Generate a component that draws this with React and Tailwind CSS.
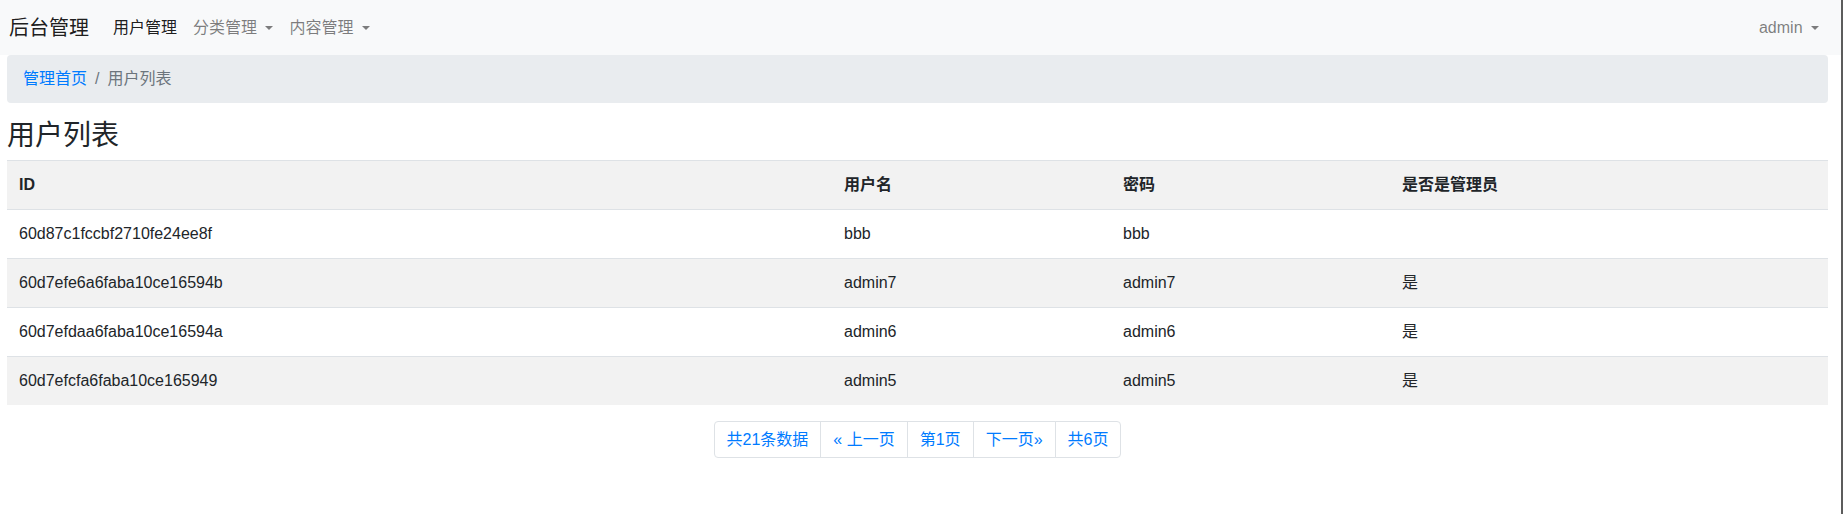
import React from "react";

function Caret() {
  return (
    <span className="inline-block w-0 h-0 ml-[4px] align-[0.255em] border-t-[4.8px] border-t-current border-x-[4.8px] border-x-transparent border-b-0" />
  );
}

const rows = [
  ["60d87c1fccbf2710fe24ee8f", "bbb", "bbb", ""],
  ["60d7efe6a6faba10ce16594b", "admin7", "admin7", "是"],
  ["60d7efdaa6faba10ce16594a", "admin6", "admin6", "是"],
  ["60d7efcfa6faba10ce165949", "admin5", "admin5", "是"],
];

export default function App() {
  return (
    <div className="flex w-[1843px] min-h-[514px] bg-white text-[#212529] text-[16px] font-['Liberation_Sans','Noto_Sans_CJK_SC',sans-serif]">
      <div className="w-[1841px]">
        <nav className="h-[55px] bg-[#f8f9fa] flex items-center justify-between pl-[9px] pr-[14px]">
          <div className="flex items-center">
            <span className="text-[20px] leading-[30px] h-[30px] text-black/90 mr-[16px]">后台管理</span>
            <ul className="flex">
              <li className="px-2 h-10 flex items-center text-black/90">用户管理</li>
              <li className="px-2 h-10 flex items-center text-black/50 whitespace-pre">
                <span>{"分类管理 "}</span>
                <Caret />
              </li>
              <li className="px-2 h-10 flex items-center text-black/50 whitespace-pre">
                <span>{"内容管理 "}</span>
                <Caret />
              </li>
            </ul>
          </div>
          <div className="px-2 h-10 flex items-center text-black/50 whitespace-pre">
            <span>{"admin "}</span>
            <Caret />
          </div>
        </nav>

        <div className="pl-[7px] w-[1828px]">
          <ol className="flex items-center h-12 bg-[#e9ecef] rounded px-4 mb-4">
            <li className="text-[#007bff]">管理首页</li>
            <li className="text-[#6c757d] pl-2">
              <span className="pr-2">/</span>用户列表
            </li>
          </ol>

          <h3 className="text-[28px] leading-[33px] h-[33px] font-normal mb-2">用户列表</h3>

          <table className="w-full border-collapse mb-4">
            <colgroup>
              <col className="w-[825px]" />
              <col className="w-[279px]" />
              <col className="w-[279px]" />
              <col className="w-[438px]" />
            </colgroup>
            <tbody>
              <tr className="bg-[#f2f2f2]">
                {["ID", "用户名", "密码", "是否是管理员"].map((h) => (
                  <th key={h} className="px-3 py-3 text-left align-top font-bold border-t border-[#dee2e6]">
                    <div className="h-6 leading-6">{h}</div>
                  </th>
                ))}
              </tr>
              {rows.map((r, i) => (
                <tr key={r[0]} className={i % 2 === 1 ? "bg-[#f2f2f2]" : "bg-white"}>
                  {r.map((c, j) => (
                    <td key={j} className="px-3 py-3 text-left align-top border-t border-[#dee2e6]">
                      <div className="h-6 leading-6">{c}</div>
                    </td>
                  ))}
                </tr>
              ))}
            </tbody>
          </table>

          <ul className="flex w-fit mx-auto">
            {["共21条数据", "« 上一页", "第1页", "下一页»", "共6页"].map((t, i) => (
              <li
                key={t}
                className={
                  "px-3 h-[37px] flex items-center border border-[#dee2e6] text-[#007bff] bg-white " +
                  (i === 0 ? "rounded-l" : "-ml-px ") +
                  (i === 4 ? " rounded-r" : "")
                }
              >
                {t}
              </li>
            ))}
          </ul>
        </div>
      </div>
      <div className="w-[2px] bg-[#5c5c5c]" />
    </div>
  );
}
